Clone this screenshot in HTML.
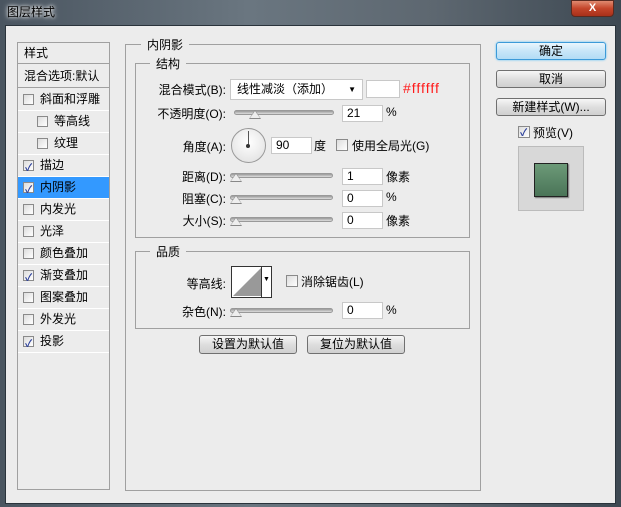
<!DOCTYPE html>
<html><head><meta charset="utf-8"><style>
*{box-sizing:border-box;margin:0;padding:0}
body{width:621px;height:507px;overflow:hidden;background:#3a4550;font-family:"Liberation Sans","Noto Sans CJK SC",sans-serif;font-size:12px;color:#000;position:relative}
.a{position:absolute}
#frame{left:0;top:0;width:621px;height:507px;background:linear-gradient(90deg,#4a5560,#6a7680 40%,#5d6770 70%,#3d4852);}
#title{left:7px;top:3px;color:#000;font-size:12px;text-shadow:0 0 6px #fff,0 0 3px #fff}
#client{left:5px;top:25px;width:611px;height:479px;background:#ececec;border:1px solid #2a333b}
#close{left:571px;top:0;width:43px;height:17px;border-radius:0 0 4px 4px;background:linear-gradient(#e08a70,#c4452a 50%,#a8301a);border:1px solid #5a2a20;color:#fff;font-weight:bold;text-align:center;font-size:11px;line-height:15px}
.list{left:17px;top:42px;width:93px;height:448px;border:1px solid #a0a0a0;background:#ececec}
.row{position:absolute;left:0;width:91px;height:22px;border-bottom:1px solid #fff;line-height:21px}
.cb{position:absolute;width:11px;height:11px;border:1px solid #8a8a8a;background:linear-gradient(135deg,#ddd,#fff)}
.cb.on::after{content:"✓";position:absolute;left:1px;top:-3px;font-size:10px;color:#2b3f9a;font-weight:bold}
.grp{border:1px solid #a0a0a0}
.gt{background:#ececec;padding:0 6px;position:absolute}
.inp{background:#fff;border:1px solid #c8c8c8;height:17px;line-height:15px;padding-left:4px}
.sl{height:5px;border-radius:3px;background:linear-gradient(#999,#ddd);border:1px solid #999}
.th{width:0;height:0;border-left:6px solid transparent;border-right:6px solid transparent;border-bottom:9px solid #888}
.th::after{content:"";position:absolute;left:-5px;top:1px;border-left:5px solid transparent;border-right:5px solid transparent;border-bottom:7px solid #eee}
.btn{border:1px solid #707070;border-radius:3px;background:linear-gradient(#f6f6f6,#dedede 50%,#d0d0d0);text-align:center;line-height:16px}
.lbl{text-align:right;width:100px}
</style></head><body>
<div class="a" id="frame"></div>
<div class="a" id="title">图层样式</div>
<div class="a" id="close">X</div>
<div class="a" id="client"></div>

<div class="a list">
 <div class="row" style="top:0;height:21px;padding-left:6px;border-bottom:1px solid #a0a0a0">样式</div>
 <div class="row" style="top:22px;height:23px;padding-left:6px;line-height:22px;border-bottom:1px solid #a0a0a0">混合选项:默认</div>
 <div class="row" style="top:46px;padding-left:22px"><span class="cb" style="left:5px;top:5px"></span>斜面和浮雕</div>
 <div class="row" style="top:68px;padding-left:36px"><span class="cb" style="left:19px;top:5px"></span>等高线</div>
 <div class="row" style="top:90px;padding-left:36px"><span class="cb" style="left:19px;top:5px"></span>纹理</div>
 <div class="row" style="top:112px;padding-left:22px"><span class="cb on" style="left:5px;top:5px"></span>描边</div>
 <div class="row" style="top:134px;padding-left:22px;background:#3399ff;color:#000"><span class="cb on" style="left:5px;top:5px"></span>内阴影</div>
 <div class="row" style="top:156px;padding-left:22px"><span class="cb" style="left:5px;top:5px"></span>内发光</div>
 <div class="row" style="top:178px;padding-left:22px"><span class="cb" style="left:5px;top:5px"></span>光泽</div>
 <div class="row" style="top:200px;padding-left:22px"><span class="cb" style="left:5px;top:5px"></span>颜色叠加</div>
 <div class="row" style="top:222px;padding-left:22px"><span class="cb on" style="left:5px;top:5px"></span>渐变叠加</div>
 <div class="row" style="top:244px;padding-left:22px"><span class="cb" style="left:5px;top:5px"></span>图案叠加</div>
 <div class="row" style="top:266px;padding-left:22px"><span class="cb" style="left:5px;top:5px"></span>外发光</div>
 <div class="row" style="top:288px;padding-left:22px"><span class="cb on" style="left:5px;top:5px"></span>投影</div>
</div>

<div class="a grp" style="left:125px;top:44px;width:356px;height:447px"></div>
<div class="a gt" style="left:141px;top:36px">内阴影</div>
<div class="a grp" style="left:135px;top:63px;width:335px;height:175px"></div>
<div class="a gt" style="left:150px;top:55px">结构</div>

<div class="a lbl" style="left:126px;top:81px">混合模式(B):</div>
<div class="a inp" style="left:230px;top:79px;width:133px;height:21px;line-height:19px;padding-left:6px">线性减淡（添加）<span style="position:absolute;right:6px;top:0;font-size:8px">▼</span></div>
<div class="a inp" style="left:366px;top:80px;width:34px;height:18px"></div>
<div class="a" style="left:403px;top:80px;color:#ff1a1a;font-size:14px;letter-spacing:1px">#ffffff</div>

<div class="a lbl" style="left:126px;top:105px">不透明度(O):</div>
<div class="a sl" style="left:234px;top:110px;width:100px"></div>
<div class="a th" style="left:249px;top:110px"></div>
<div class="a inp" style="left:342px;top:105px;width:41px">21</div>
<div class="a" style="left:386px;top:105px">%</div>

<div class="a lbl" style="left:126px;top:138px">角度(A):</div>
<div class="a" style="left:231px;top:128px;width:35px;height:35px;border-radius:50%;border:1px solid #999;background:radial-gradient(circle at 50% 40%,#fff,#ddd)"></div>
<div class="a" style="left:248px;top:131px;width:1px;height:15px;background:#555"></div>
<div class="a" style="left:246px;top:144px;width:4px;height:4px;border-radius:50%;background:#333"></div>
<div class="a inp" style="left:271px;top:137px;width:41px">90</div>
<div class="a" style="left:314px;top:137px">度</div>
<div class="a cb" style="left:336px;top:139px;width:12px;height:12px"></div>
<div class="a" style="left:352px;top:137px">使用全局光(G)</div>

<div class="a lbl" style="left:126px;top:168px">距离(D):</div>
<div class="a sl" style="left:230px;top:173px;width:103px"></div>
<div class="a th" style="left:230px;top:173px"></div>
<div class="a inp" style="left:342px;top:168px;width:41px">1</div>
<div class="a" style="left:386px;top:168px">像素</div>

<div class="a lbl" style="left:126px;top:190px">阻塞(C):</div>
<div class="a sl" style="left:230px;top:195px;width:103px"></div>
<div class="a th" style="left:230px;top:195px"></div>
<div class="a inp" style="left:342px;top:190px;width:41px">0</div>
<div class="a" style="left:386px;top:190px">%</div>

<div class="a lbl" style="left:126px;top:212px">大小(S):</div>
<div class="a sl" style="left:230px;top:217px;width:103px"></div>
<div class="a th" style="left:230px;top:217px"></div>
<div class="a inp" style="left:342px;top:212px;width:41px">0</div>
<div class="a" style="left:386px;top:212px">像素</div>

<div class="a grp" style="left:135px;top:251px;width:335px;height:78px"></div>
<div class="a gt" style="left:150px;top:243px">品质</div>
<div class="a lbl" style="left:126px;top:275px">等高线:</div>
<div class="a" style="left:231px;top:266px;width:41px;height:32px;border:1px solid #333;background:#fff">
 <svg width="30" height="30" style="position:absolute;left:0;top:0"><polygon points="1,29 29,1 29,29" fill="#999"/></svg>
 <div style="position:absolute;left:29px;top:0;width:10px;height:30px;border-left:1px solid #333;font-size:7px;text-align:center;line-height:26px">▼</div>
</div>
<div class="a cb" style="left:286px;top:275px;width:12px;height:12px"></div>
<div class="a" style="left:301px;top:273px">消除锯齿(L)</div>
<div class="a lbl" style="left:126px;top:303px">杂色(N):</div>
<div class="a sl" style="left:230px;top:308px;width:103px"></div>
<div class="a th" style="left:230px;top:308px"></div>
<div class="a inp" style="left:342px;top:302px;width:41px">0</div>
<div class="a" style="left:386px;top:303px">%</div>

<div class="a btn" style="left:199px;top:335px;width:98px;height:19px">设置为默认值</div>
<div class="a btn" style="left:307px;top:335px;width:98px;height:19px">复位为默认值</div>

<div class="a btn" style="left:496px;top:42px;width:110px;height:18px;border-color:#3c9ad8;background:linear-gradient(#eaf6fd,#c8e6f8 50%,#b2dcf5);box-shadow:0 0 2px #5bc0f8">确定</div>
<div class="a btn" style="left:496px;top:70px;width:110px;height:18px">取消</div>
<div class="a btn" style="left:496px;top:98px;width:110px;height:18px">新建样式(W)...</div>
<div class="a cb on" style="left:518px;top:126px;width:12px;height:12px"></div>
<div class="a" style="left:533px;top:124px">预览(V)</div>
<div class="a" style="left:518px;top:146px;width:66px;height:65px;border:1px solid #bbb;background:#d8d8d8"></div>
<div class="a" style="left:534px;top:163px;width:34px;height:34px;border:1px solid #222;background:linear-gradient(#6c9a78,#4a7458);box-shadow:1px 1px 1px #777"></div>
</body></html>
